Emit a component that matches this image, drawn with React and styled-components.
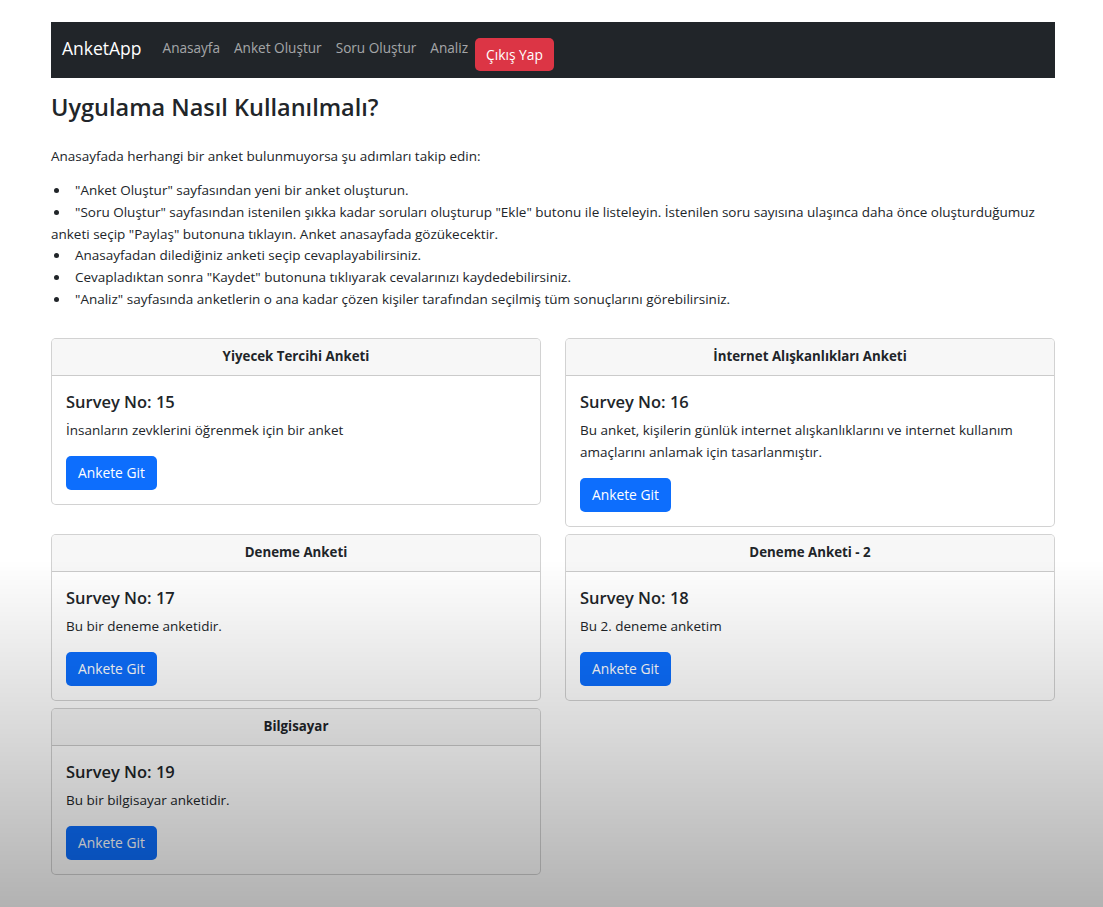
import React from "react";
import styled, { createGlobalStyle } from "styled-components";

const Global = createGlobalStyle`
  html, body { margin: 0; padding: 0; }
  body {
    background: #fff;
    font-family: "Open Sans", "Noto Sans", sans-serif;
    color: #212529;
    font-size: 13.5px;
    line-height: 1.615;
  }
  * { box-sizing: border-box; }
`;

const Page = styled.div`
  padding: 22px 48px 30px 51px;
  min-height: 907px;
`;

const Shade = styled.div`
  position: fixed;
  inset: 0;
  pointer-events: none;
  background: linear-gradient(
    to bottom,
    rgba(0, 0, 0, 0) 0,
    rgba(0, 0, 0, 0) 560px,
    rgba(0, 0, 0, 0.3) 907px
  );
`;

const Navbar = styled.nav`
  height: 56px;
  background: #212529;
  display: flex;
  align-items: center;
  padding: 0 11px;
`;

const Brand = styled.a`
  color: #fff;
  font-size: 17.5px;
  margin-right: 14px;
  text-decoration: none;
  line-height: 1;
  padding-bottom: 2px;
`;

const NavLink = styled.a`
  color: rgba(255, 255, 255, 0.6);
  font-size: 13.6px;
  padding: 0 7px;
  text-decoration: none;
  line-height: 1;
  margin-bottom: 4px;
`;

const Button = styled.button`
  border: none;
  border-radius: 5px;
  font-family: inherit;
  font-size: 13.8px;
  color: #fff;
  background: ${(p) => (p.$variant === "danger" ? "#dc3545" : "#0d6efd")};
  height: 34px;
  padding: 0 12px;
  cursor: pointer;
`;

const LogoutButton = styled(Button)`
  margin-top: 8px;
  padding: 0 11px;
  height: 33px;
`;

const Title = styled.h2`
  font-size: 23.5px;
  font-weight: 600;
  margin: 15px 0 25px;
  line-height: 1.2;
  color: #212529;
`;

const Intro = styled.p`
  margin: 0 0 12px;
`;

const Steps = styled.ul`
  list-style: none;
  margin: 0 0 27px;
  padding: 0;
`;

const Step = styled.li`
  &::before {
    content: "";
    display: inline-block;
    width: 5px;
    height: 5px;
    border-radius: 50%;
    background: #212529;
    margin: 0 16px 0 3px;
    vertical-align: middle;
    position: relative;
    top: -1px;
  }
`;

const Grid = styled.div`
  display: grid;
  grid-template-columns: 1fr 1fr;
  column-gap: 24px;
  row-gap: 7px;
  align-items: start;
`;

const Card = styled.div`
  border: 1px solid rgba(0, 0, 0, 0.176);
  border-radius: 5px;
  background: #fff;
  overflow: hidden;
`;

const CardHeader = styled.div`
  background: #f7f7f7;
  border-bottom: 1px solid rgba(0, 0, 0, 0.176);
  text-align: center;
  font-weight: 700;
  font-size: 13.3px;
  height: 37px;
  display: flex;
  align-items: center;
  justify-content: center;
`;

const CardBody = styled.div`
  padding: 15px 14px 14px;
`;

const CardTitle = styled.h5`
  font-size: 16.5px;
  font-weight: 600;
  margin: 0 0 6px;
  line-height: 22px;
`;

const CardText = styled.p`
  margin: 0 0 15px;
  line-height: 22px;
`;

const surveys = [
  { title: "Yiyecek Tercihi Anketi", no: 15, text: "İnsanların zevklerini öğrenmek için bir anket" },
  {
    title: "İnternet Alışkanlıkları Anketi",
    no: 16,
    text: "Bu anket, kişilerin günlük internet alışkanlıklarını ve internet kullanım amaçlarını anlamak için tasarlanmıştır.",
  },
  { title: "Deneme Anketi", no: 17, text: "Bu bir deneme anketidir." },
  { title: "Deneme Anketi - 2", no: 18, text: "Bu 2. deneme anketim" },
  { title: "Bilgisayar", no: 19, text: "Bu bir bilgisayar anketidir." },
];

export default function App() {
  return (
    <>
      <Global />
      <Page>
        <Navbar>
          <Brand href="#">AnketApp</Brand>
          <NavLink href="#">Anasayfa</NavLink>
          <NavLink href="#">Anket Oluştur</NavLink>
          <NavLink href="#">Soru Oluştur</NavLink>
          <NavLink href="#">Analiz</NavLink>
          <LogoutButton $variant="danger">Çıkış Yap</LogoutButton>
        </Navbar>
        <Title>Uygulama Nasıl Kullanılmalı?</Title>
        <Intro>Anasayfada herhangi bir anket bulunmuyorsa şu adımları takip edin:</Intro>
        <Steps>
          <Step>"Anket Oluştur" sayfasından yeni bir anket oluşturun.</Step>
          <Step>
            "Soru Oluştur" sayfasından istenilen şıkka kadar soruları oluşturup "Ekle" butonu ile listeleyin. İstenilen soru
            sayısına ulaşınca daha önce oluşturduğumuz anketi seçip "Paylaş" butonuna tıklayın. Anket anasayfada
            gözükecektir.
          </Step>
          <Step>Anasayfadan dilediğiniz anketi seçip cevaplayabilirsiniz.</Step>
          <Step>Cevapladıktan sonra "Kaydet" butonuna tıklıyarak cevalarınızı kaydedebilirsiniz.</Step>
          <Step>"Analiz" sayfasında anketlerin o ana kadar çözen kişiler tarafından seçilmiş tüm sonuçlarını görebilirsiniz.</Step>
        </Steps>
        <Grid>
          {surveys.map((s) => (
            <Card key={s.no}>
              <CardHeader>{s.title}</CardHeader>
              <CardBody>
                <CardTitle>Survey No: {s.no}</CardTitle>
                <CardText>{s.text}</CardText>
                <Button>Ankete Git</Button>
              </CardBody>
            </Card>
          ))}
        </Grid>
      </Page>
      <Shade />
    </>
  );
}
